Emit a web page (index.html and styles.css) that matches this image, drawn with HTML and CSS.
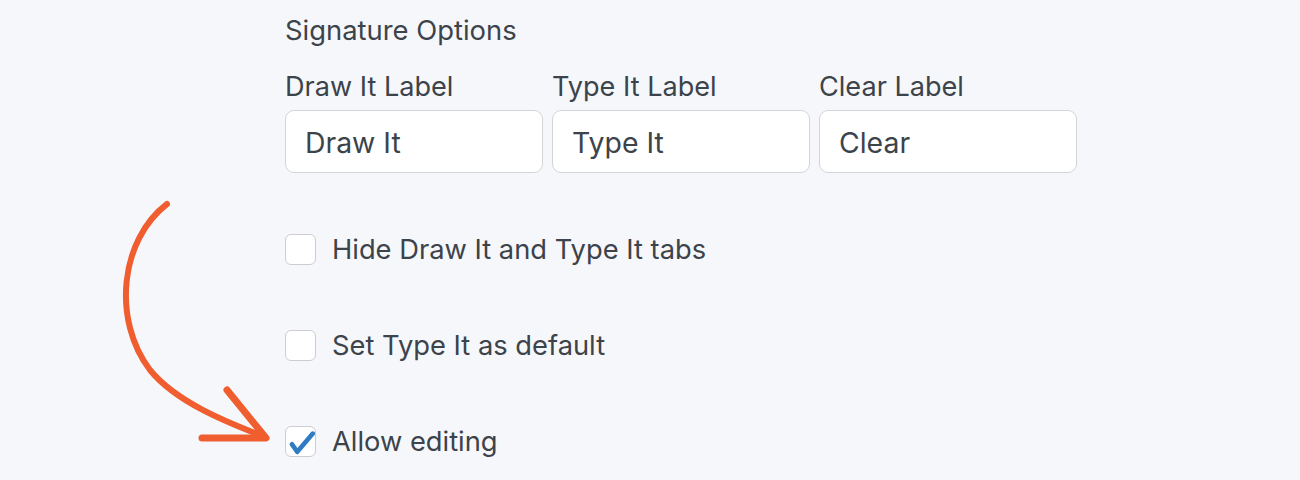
FILE: index.html
```html
<!DOCTYPE html>
<html lang="en">
<head>
<meta charset="utf-8">
<title>Signature Options</title>
<link rel="stylesheet" href="styles.css">
</head>
<body>
<div class="page">
  <div class="panel">
    <div class="section-title">Signature Options</div>
    <div class="fields">
      <div class="field">
        <label class="field-label">Draw It Label</label>
        <div class="input">Draw It</div>
      </div>
      <div class="field">
        <label class="field-label">Type It Label</label>
        <div class="input">Type It</div>
      </div>
      <div class="field">
        <label class="field-label">Clear Label</label>
        <div class="input">Clear</div>
      </div>
    </div>
    <div class="checks">
      <div class="check-row"><span class="box"></span><span class="check-label">Hide Draw It and Type It tabs</span></div>
      <div class="check-row"><span class="box"></span><span class="check-label">Set Type It as default</span></div>
      <div class="check-row"><span class="box checked"><svg viewBox="0 0 28 28" width="28" height="28"><path d="M5 16.3 L10.3 23.8 L25.8 5.6" fill="none" stroke="#2f7cc3" stroke-width="4.6" stroke-linecap="round" stroke-linejoin="round"/></svg></span><span class="check-label">Allow editing</span></div>
    </div>
  </div>
  <svg class="arrow" width="300" height="480" viewBox="0 0 300 480">
    <path d="M167 204 C120 240 112 320 150 370 C176 402 226 422 265 437" fill="none" stroke="#f05d2e" stroke-width="6" stroke-linecap="round"/>
    <path d="M227 390 L266 438 L202 438" fill="none" stroke="#f05d2e" stroke-width="7" stroke-linecap="round" stroke-linejoin="round"/>
  </svg>
</div>
</body>
</html>
```

FILE: styles.css
```css
* { box-sizing: border-box; }
html, body { margin: 0; padding: 0; }
body {
  background: #f6f7fb;
  font-family: Inter, "Noto Sans", sans-serif;
  color: #3c434a;
  width: 1300px;
  height: 480px;
  overflow: hidden;
}
.page { position: relative; width: 1300px; height: 480px; }
.panel {
  padding: 14px 0 0 285px;
  display: flex;
  flex-direction: column;
}
.section-title {
  font-size: 27.4px;
  line-height: 32px;
}
.fields {
  display: flex;
  gap: 9px;
  margin-top: 25px;
}
.field { display: flex; flex-direction: column; width: 258px; }
.field-label {
  font-size: 27.1px;
  line-height: 32px;
  margin-bottom: 7px;
}
.input {
  height: 63px;
  background: #fff;
  border: 1.5px solid #d3d5d9;
  border-radius: 9px;
  padding: 2px 19px 0;
  font-size: 28.4px;
  line-height: 60px;
}
.checks {
  display: flex;
  flex-direction: column;
  gap: 65px;
  margin-top: 61px;
}
.check-row {
  display: flex;
  align-items: center;
  gap: 16px;
  height: 31px;
}
.box {
  width: 31px;
  height: 31px;
  background: #fff;
  border: 1.5px solid #cbcdd2;
  border-radius: 6px;
  display: flex;
  align-items: center;
  justify-content: center;
  flex: none;
}
.check-label {
  font-size: 27.3px;
  line-height: 34px;
}
.arrow {
  position: absolute;
  left: 0;
  top: 0;
  pointer-events: none;
}
```
